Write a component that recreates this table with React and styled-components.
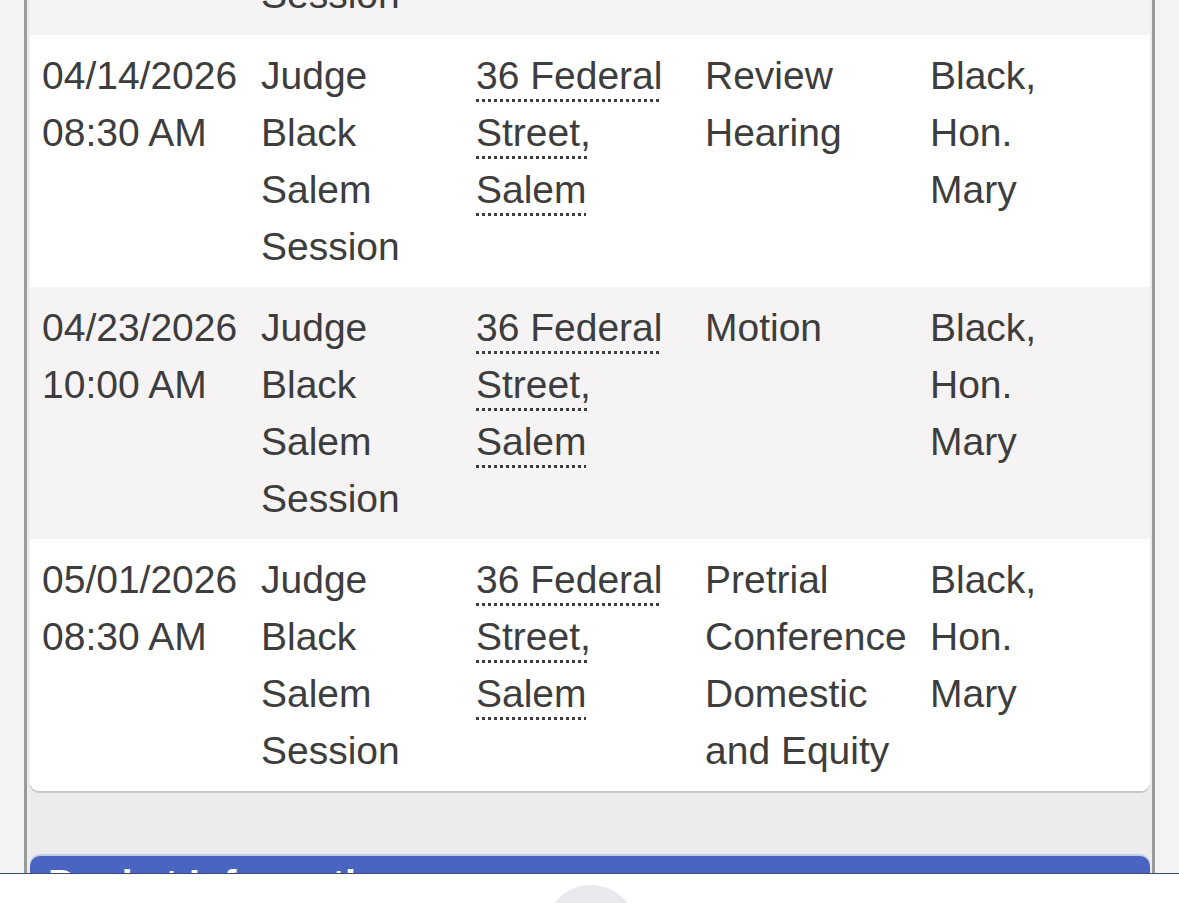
import React from "react";
import styled, { createGlobalStyle } from "styled-components";

const hearings = [
  {
    date: "04/07/2026",
    time: "09:00 AM",
    session: "Judge Black Salem Session",
    location: ["36 Federal", "Street,", "Salem"],
    type: "Status Review",
    judge: "Black, Hon. Mary",
  },
  {
    date: "04/14/2026",
    time: "08:30 AM",
    session: "Judge Black Salem Session",
    location: ["36 Federal", "Street,", "Salem"],
    type: "Review Hearing",
    judge: "Black, Hon. Mary",
  },
  {
    date: "04/23/2026",
    time: "10:00 AM",
    session: "Judge Black Salem Session",
    location: ["36 Federal", "Street,", "Salem"],
    type: "Motion",
    judge: "Black, Hon. Mary",
  },
  {
    date: "05/01/2026",
    time: "08:30 AM",
    session: "Judge Black Salem Session",
    location: ["36 Federal", "Street,", "Salem"],
    type: "Pretrial Conference Domestic and Equity",
    judge: "Black, Hon. Mary",
  },
];

function App() {
  return (
    <>
      <GlobalStyle />
      <Viewport>
        <Page>
          <Card>
            <Table>
              <colgroup>
                <col style={{ width: 219 }} />
                <col style={{ width: 215 }} />
                <col style={{ width: 229 }} />
                <col style={{ width: 225 }} />
                <col />
              </colgroup>
              <tbody>
                {hearings.map((h, i) => (
                  <Row key={i} striped={i % 2 === 0}>
                    <Cell>
                      {h.date}
                      <br />
                      {h.time}
                    </Cell>
                    <Cell>{h.session}</Cell>
                    <Cell>
                      <Location>{h.location.join(" ")}</Location>
                    </Cell>
                    <Cell>{h.type}</Cell>
                    <LastCell>{h.judge}</LastCell>
                  </Row>
                ))}
              </tbody>
            </Table>
          </Card>
          <SectionHeader>Docket Information</SectionHeader>
          <Filler />
        </Page>
        <BottomBar>
          <HomeButton />
        </BottomBar>
      </Viewport>
    </>
  );
}

const GlobalStyle = createGlobalStyle`
  html, body {
    margin: 0;
    padding: 0;
    background: #f3f3f3;
    font-family: "Liberation Sans", Arial, sans-serif;
  }
`;

const Viewport = styled.div`
  height: 903px;
  overflow: hidden;
  position: relative;
`;

const Page = styled.div`
  margin: -217px 24px 0 24px;
  border-left: 3px solid #9a9a9a;
  border-right: 3px solid #9a9a9a;
  background: #ececec;
  padding: 0 2px 0 3px;
`;

const Card = styled.div`
  background: #ffffff;
  border-radius: 0 0 9px 9px;
  box-shadow: 0 2px 0 #c9c9c9;
  overflow: hidden;
`;

const Table = styled.table`
  width: 100%;
  border-collapse: collapse;
  table-layout: fixed;
`;

const Row = styled.tr`
  background: ${(props) => (props.striped ? "#f5f3f4" : "#ffffff")};
`;

const Cell = styled.td`
  vertical-align: top;
  padding: 12px 6px 12px 12px;
  font-size: 39px;
  line-height: 57px;
  color: #3d3d3d;
`;

const LastCell = styled(Cell)`
  padding-right: 60px;
`;

const Location = styled.span`
  text-decoration: underline dotted #3d3d3d;
  text-decoration-thickness: 3px;
  text-underline-offset: 10px;
`;

const SectionHeader = styled.div`
  margin-top: 65px;
  background: #4a64c1;
  border-radius: 10px 10px 0 0;
  box-shadow: 0 -2px 0 #c8cbe4;
  color: #ffffff;
  font-weight: bold;
  font-size: 39px;
  line-height: 46px;
  padding: 5px 18px;
`;

const Filler = styled.div`
  height: 200px;
  background: #ffffff;
`;

const BottomBar = styled.div`
  position: absolute;
  left: 0;
  right: 0;
  bottom: 0;
  height: 29px;
  background: #ffffff;
  border-top: 1px solid #3d4a80;
  overflow: hidden;
  display: flex;
  justify-content: center;
`;

const HomeButton = styled.div`
  width: 92px;
  height: 92px;
  margin: 11px 0 0 2px;
  border-radius: 50%;
  background: #e8e8ed;
`;

export default App;
